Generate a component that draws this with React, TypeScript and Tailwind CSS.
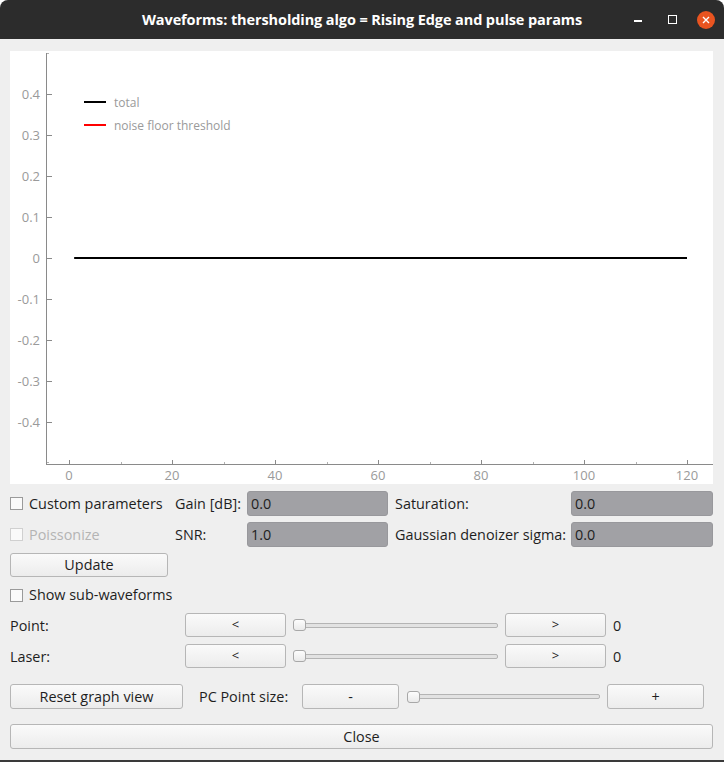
import React from 'react';

// ─────────────────────────────────────────────────────────────────────────────
// Chart geometry (local coords of the white plot box, 703 x 433)
// ─────────────────────────────────────────────────────────────────────────────

const Y_ZERO = 207;
const Y_SCALE = 410; // px per 1.0
const X_ZERO = 59;
const X_SCALE = 5.15; // px per unit

const yAt = (v: number) => Y_ZERO - v * Y_SCALE;
const xAt = (v: number) => X_ZERO + v * X_SCALE;

const Y_TICKS = [0.4, 0.3, 0.2, 0.1, 0, -0.1, -0.2, -0.3, -0.4];
const X_TICKS = [0, 20, 40, 60, 80, 100, 120];
const X_MINOR = [10, 30, 50, 70, 90, 110];

function Plot() {
  return (
    <div className="bg-white h-[433px] w-full">
      <svg width="703" height="433" className="block" style={{ fontFamily: '"Open Sans", sans-serif' }}>
        {/* axes */}
        <line x1="36.5" y1="2" x2="36.5" y2="414" stroke="#8a8a8a" strokeWidth="1" />
        <line x1="36" y1="413.5" x2="703" y2="413.5" stroke="#8a8a8a" strokeWidth="1" />
        <line x1="37" x2="39" y1="2.5" y2="2.5" stroke="#b0b0b0" />
        <line x1="37" x2="39" y1="411.5" y2="411.5" stroke="#b0b0b0" />

        {Y_TICKS.map((v) => (
          <g key={v}>
            <line x1="37" x2="42" y1={Math.round(yAt(v)) + 0.5} y2={Math.round(yAt(v)) + 0.5} stroke="#8a8a8a" />
            <text x="30" y={yAt(v) + 5} textAnchor="end" fontSize="13" fill="#9a9a9a">
              {v === 0 ? '0' : v.toFixed(1)}
            </text>
          </g>
        ))}

        {X_TICKS.map((v) => (
          <g key={v}>
            <line x1={Math.round(xAt(v)) + 0.5} x2={Math.round(xAt(v)) + 0.5} y1="409" y2="413" stroke="#8a8a8a" />
            <text x={xAt(v)} y="429" textAnchor="middle" fontSize="13" fill="#9a9a9a">
              {v}
            </text>
          </g>
        ))}
        {X_MINOR.map((v) => (
          <line key={v} x1={Math.round(xAt(v)) + 0.5} x2={Math.round(xAt(v)) + 0.5} y1="411" y2="413" stroke="#b0b0b0" />
        ))}

        {/* data */}
        <line x1={xAt(1)} x2={xAt(120)} y1={Y_ZERO} y2={Y_ZERO} stroke="#000" strokeWidth="2" />

        {/* legend */}
        <line x1="74" x2="96" y1="51" y2="51" stroke="#000" strokeWidth="2" />
        <text x="104" y="56" fontSize="12" fill="#9a9a9a">total</text>
        <line x1="74" x2="96" y1="74" y2="74" stroke="#ff0000" strokeWidth="2" />
        <text x="104" y="79" fontSize="12" fill="#9a9a9a">noise floor threshold</text>
      </svg>
    </div>
  );
}

function Checkbox({ label, disabled = false }: { label: string; disabled?: boolean }) {
  return (
    <div className="flex items-center gap-[6px]">
      <span
        className={`block w-[13px] h-[13px] bg-[#fafafa] border ${disabled ? 'border-[#d0d0d0]' : 'border-[#9a9a9a]'}`}
      />
      <span className={disabled ? 'text-[#b4b4b4]' : 'text-[#1e1e1e]'}>{label}</span>
    </div>
  );
}

function Field({ value }: { value: string }) {
  return (
    <div className="h-[25px] rounded-[3px] bg-[#a1a1a5] border border-[#98989c] flex items-center px-[3px] text-[#1e1e1e]">
      {value}
    </div>
  );
}

function Btn({ label, className = '' }: { label: string; className?: string }) {
  return (
    <button
      className={`rounded-[3px] border border-[#b6b6b6] bg-gradient-to-b from-[#fafafa] to-[#ececec] text-[#1e1e1e] flex items-center justify-center ${className}`}
    >
      {label}
    </button>
  );
}

function Slider({ className = '' }: { className?: string }) {
  return (
    <div className={`relative h-[24px] flex items-center ${className}`}>
      <div className="h-[5px] w-full rounded-[2px] border border-[#b4b4b4] bg-[#e2e2e2]" />
      <div className="absolute left-0 top-[6px] w-[13px] h-[12px] rounded-[3px] border border-[#a8a8a8] bg-gradient-to-b from-[#fdfdfd] to-[#eaeaea]" />
    </div>
  );
}

export default function App() {
  return (
    <div className="w-[724px] h-[762px] bg-white overflow-hidden" style={{ fontFamily: '"Open Sans", sans-serif' }}>
      <div className="flex flex-col h-full rounded-t-[8px] overflow-hidden bg-[#efefef]">
        {/* Title bar */}
        <div className="h-[39px] shrink-0 bg-[#2c2c2c] relative flex items-center justify-center">
          <span className="text-white font-bold text-[14.5px] tracking-[-0.1px]">
            Waveforms: thersholding algo = Rising Edge and pulse params
          </span>
          <div className="absolute right-[9px] top-0 h-full flex items-center">
            <span className="block w-[8px] h-[1.5px] bg-white mt-[3px] mr-[26px]" />
            <span className="block w-[9px] h-[9px] border border-white mr-[20px]" />
            <span className="w-[18px] h-[18px] rounded-full bg-[#e95420] flex items-center justify-center">
              <svg width="8" height="8" viewBox="0 0 8 8">
                <path d="M1 1 L7 7 M7 1 L1 7" stroke="#fff" strokeWidth="1.4" />
              </svg>
            </span>
          </div>
        </div>

        {/* Body */}
        <div className="flex-1 flex flex-col pl-[10px] pr-[11px] pt-[12px] text-[14.4px]">
          <Plot />

          {/* Parameters */}
          <div className="mt-[7px] grid grid-cols-[165px_72px_141px_183px_142px] gap-y-[6px]">
            <div className="flex items-center"><Checkbox label="Custom parameters" /></div>
            <div className="flex items-center text-[#1e1e1e]">Gain [dB]:</div>
            <Field value="0.0" />
            <div className="flex items-center pl-[7px] text-[#1e1e1e]">Saturation:</div>
            <Field value="0.0" />

            <div className="flex items-center"><Checkbox label="Poissonize" disabled /></div>
            <div className="flex items-center text-[#1e1e1e]">SNR:</div>
            <Field value="1.0" />
            <div className="flex items-center pl-[7px] text-[#1e1e1e]">Gaussian denoizer sigma:</div>
            <Field value="0.0" />
          </div>

          <Btn label="Update" className="mt-[6px] w-[158px] h-[24px]" />

          <div className="mt-[8px] h-[20px] flex items-center">
            <Checkbox label="Show sub-waveforms" />
          </div>

          {/* Point / Laser */}
          <div className="mt-[8px] flex flex-col gap-[7px]">
            {['Point:', 'Laser:'].map((lbl) => (
              <div key={lbl} className="flex items-center h-[24px]">
                <span className="w-[175px] text-[#1e1e1e] pt-[1px]">{lbl}</span>
                <Btn label="<" className="w-[101px] h-[24px] text-[13px]" />
                <Slider className="ml-[7px] w-[205px]" />
                <Btn label=">" className="ml-[7px] w-[101px] h-[24px] text-[13px]" />
                <span className="ml-[7px] text-[#1e1e1e] pt-[1px]">0</span>
              </div>
            ))}
          </div>

          {/* Graph view */}
          <div className="mt-[16px] flex items-center h-[25px]">
            <Btn label="Reset graph view" className="w-[173px] h-[25px]" />
            <span className="ml-[16px] w-[103px] text-[#1e1e1e]">PC Point size:</span>
            <Btn label="-" className="w-[97px] h-[25px]" />
            <Slider className="ml-[8px] w-[193px]" />
            <Btn label="+" className="ml-[7px] w-[97px] h-[25px]" />
          </div>

          <Btn label="Close" className="mt-[15px] w-full h-[25px]" />
        </div>

        <div className="h-[2px] shrink-0 bg-[#3a3a3a]" />
      </div>
    </div>
  );
}
